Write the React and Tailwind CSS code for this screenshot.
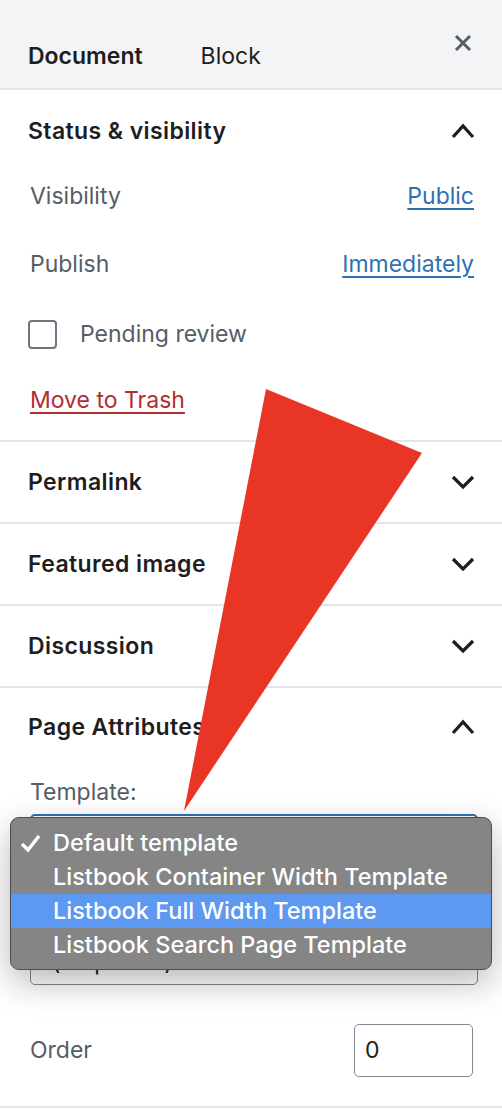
import React from "react";

const font = { fontFamily: "Inter, 'Noto Sans', sans-serif" };

function ChevronUp() {
  return (
    <svg width="24" height="16" viewBox="0 0 24 16" className="block">
      <polyline points="2,14 12,3 22,14" fill="none" stroke="#1e1e1e" strokeWidth="3.2" />
    </svg>
  );
}
function ChevronDown() {
  return (
    <svg width="24" height="16" viewBox="0 0 24 16" className="block">
      <polyline points="2,3 12,13 22,3" fill="none" stroke="#1e1e1e" strokeWidth="3.2" />
    </svg>
  );
}

function PanelTitle({ title, open }) {
  return (
    <div className="flex items-center justify-between pl-[28px] pr-[27px] h-full">
      <span className="text-[23px] leading-[30px] font-semibold tracking-[0.4px] text-[#1e1e1e]">{title}</span>
      {open ? <ChevronUp /> : <ChevronDown />}
    </div>
  );
}

export default function App() {
  return (
    <div className="relative w-[502px] h-[1110px] overflow-hidden bg-white" style={font}>
      {/* Header */}
      <div className="h-[90px] bg-[#f3f4f5] border-b-2 border-[#e2e4e7] flex items-center justify-between pl-[28px] pr-[29px]">
        <div className="flex pt-[24px]">
          <span className="text-[23px] leading-[28px] font-semibold text-[#1e1e1e]">Document</span>
          <span className="ml-[58px] text-[23px] leading-[28px] text-[#1e1e1e]">Block</span>
        </div>
        <svg width="20" height="20" viewBox="0 0 20 20" className="block -mt-[2px]">
          <path d="M3 3 L17 17 M17 3 L3 17" stroke="#555d66" strokeWidth="3" />
        </svg>
      </div>

      {/* Status & visibility */}
      <div className="border-b-2 border-[#e2e4e7] pb-[16px]">
        <div className="h-[82px]">
          <PanelTitle title="Status & visibility" open />
        </div>
        <div className="pr-[28px] pl-[30px] text-[23px]">
          <div className="h-[48px] flex items-center justify-between">
            <span className="text-[#555d66]">Visibility</span>
            <span className="text-[#2f71b0] underline underline-offset-[4px] decoration-[1.5px]">Public</span>
          </div>
          <div className="mt-[20px] h-[48px] flex items-center justify-between">
            <span className="text-[#555d66]">Publish</span>
            <span className="text-[#2f71b0] underline underline-offset-[4px] decoration-[1.5px]">Immediately</span>
          </div>
          <div className="mt-[22px] h-[48px] flex items-center -ml-[2px]">
            <span className="w-[29px] h-[29px] border-[2.5px] border-[#6c7781] rounded-[4px] bg-white" />
            <span className="ml-[23px] text-[#555d66]">Pending review</span>
          </div>
          <div className="mt-[18px] h-[48px] flex items-center">
            <span className="text-[#b32d2e] underline underline-offset-[4px] decoration-[1.5px]">Move to Trash</span>
          </div>
        </div>
      </div>

      <div className="h-[82px] border-b-2 border-[#e2e4e7]">
        <PanelTitle title="Permalink" />
      </div>
      <div className="h-[82px] border-b-2 border-[#e2e4e7]">
        <PanelTitle title="Featured image" />
      </div>
      <div className="h-[82px] border-b-2 border-[#e2e4e7]">
        <PanelTitle title="Discussion" />
      </div>

      {/* Page Attributes */}
      <div className="border-b-2 border-[#e2e4e7] pb-[29px]">
        <div className="h-[78px]">
          <PanelTitle title="Page Attributes" open />
        </div>
        <div className="pl-[30px] pr-[24px] text-[23px]">
          <div className="mt-[12px] leading-[28px] text-[#555d66]">Template:</div>
          <div className="mt-[8px] h-[44px] border-2 border-[#2f71b0] rounded-[5px] flex items-center px-[20px] text-[#1e1e1e]">
            Default template
          </div>
          <div className="mt-[20px] leading-[28px] text-[#555d66]">Parent Page:</div>
          <div className="mt-[34px] h-[45px] border-[1.5px] border-[#7e8993] rounded-[5px] flex items-center pl-[21px] text-[#1e1e1e]">
            (no parent)
          </div>
          <div className="mt-[39px] h-[53px] flex items-center justify-between pr-[5px]">
            <span className="text-[#555d66]">Order</span>
            <div className="w-[119px] h-[53px] border-[1.5px] border-[#7e8993] rounded-[5px] flex items-center pl-[10px] text-[#1e1e1e]">
              0
            </div>
          </div>
        </div>
      </div>

      {/* Native dropdown menu overlay */}
      <div className="absolute left-[10px] top-[817px] w-[482px] h-[153px] rounded-[9px] bg-[#858585] border border-[#4d4d4d] shadow-[0_12px_34px_rgba(0,0,0,0.28)] pt-[8px] text-white text-[23.5px] font-medium overflow-hidden">
        <div className="h-[34px] flex items-center relative pl-[42px]">
          <svg width="22" height="20" viewBox="0 0 22 20" className="absolute left-[9px] top-[8px]">
            <polyline points="2,10 8,16 19,2" fill="none" stroke="white" strokeWidth="3.4" />
          </svg>
          Default template
        </div>
        <div className="h-[34px] flex items-center pl-[42px]">Listbook Container Width Template</div>
        <div className="h-[34px] flex items-center pl-[42px] bg-[#5d98f1]">Listbook Full Width Template</div>
        <div className="h-[34px] flex items-center pl-[42px]">Listbook Search Page Template</div>
      </div>

      {/* Red annotation arrow */}
      <svg className="absolute inset-0 pointer-events-none" width="502" height="1110" viewBox="0 0 502 1110">
        <polygon points="266,389 422,453 184,811" fill="#e83526" />
      </svg>
    </div>
  );
}
